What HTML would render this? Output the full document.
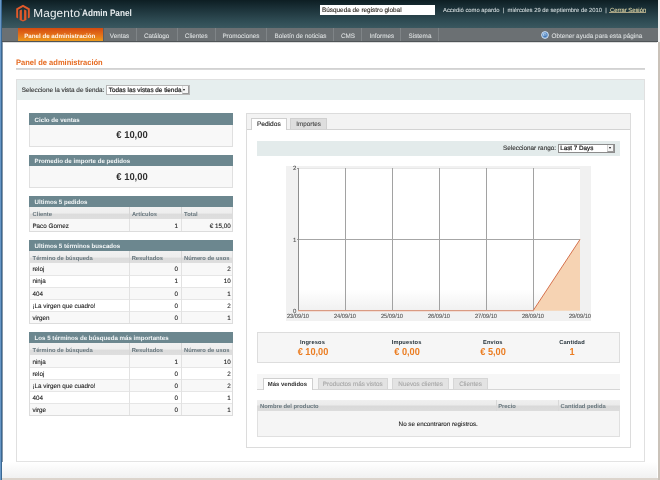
<!DOCTYPE html>
<html><head><meta charset="utf-8"><title>Magento Admin Panel</title>
<style>
html,body{margin:0;padding:0;width:660px;height:480px;overflow:hidden;background:#fff}
body{position:relative;font-family:"Liberation Sans",sans-serif;filter:blur(0.35px)}
body>div{position:absolute}
.t{position:absolute;white-space:nowrap;line-height:1;text-rendering:geometricPrecision;font-family:"Liberation Sans",sans-serif}
</style></head><body>
<div style="left:0.00px;top:0.00px;width:660.00px;height:480.00px;background:#fff"></div>
<div style="left:2.00px;top:0.00px;width:655.50px;height:28.00px;background:linear-gradient(#0d1e23 0%,#1d343b 35%,#2f4c54 75%,#3a5860 100%)"></div>
<div style="left:2.00px;top:28.00px;width:655.50px;height:14.00px;background:#6b7073"></div>
<div style="left:2.00px;top:41.00px;width:655.50px;height:1.00px;background:#4f5457"></div>
<div style="left:2.60px;top:42.00px;width:654.90px;height:1.00px;background:#dcdddd"></div>
<div style="left:18.00px;top:28.00px;width:85.00px;height:13.00px;background:linear-gradient(#d24a10,#e5711a 55%,#eb9a1c)"></div>
<div style="left:103.00px;top:28.00px;width:1.00px;height:13.00px;background:#595e61"></div>
<div style="left:136.00px;top:28.00px;width:1.00px;height:13.00px;background:#7f8487"></div>
<div style="left:177.00px;top:28.00px;width:1.00px;height:13.00px;background:#7f8487"></div>
<div style="left:215.00px;top:28.00px;width:1.00px;height:13.00px;background:#7f8487"></div>
<div style="left:266.00px;top:28.00px;width:1.00px;height:13.00px;background:#7f8487"></div>
<div style="left:333.00px;top:28.00px;width:1.00px;height:13.00px;background:#7f8487"></div>
<div style="left:361.00px;top:28.00px;width:1.00px;height:13.00px;background:#7f8487"></div>
<div style="left:400.00px;top:28.00px;width:1.00px;height:13.00px;background:#7f8487"></div>
<div style="left:438.00px;top:28.00px;width:1.00px;height:13.00px;background:#7f8487"></div>
<svg style="position:absolute;left:15px;top:4px" width="17" height="18" viewBox="15 4 17 18">
<path d="M16.2 17.6 V8.6 L23 4.7 L29.8 8.6 V17.6 L27.9 18.6 V9.7 L23 6.9 L18.1 9.7 V18.6 Z" fill="#e0592a"/>
<path d="M19.6 10.6 L21.9 9.4 V19.6 L23 20.2 L24.1 19.6 V9.4 L26.4 10.6 V20 L23 21.6 L19.6 20 Z" fill="#e0592a"/>
</svg>
<span class="t" style="left:33.20px;top:7.51px;font-size:11.8px;color:#eef2f3;-webkit-text-stroke:0.1px currentColor;letter-spacing:0.15px;-webkit-text-stroke:0;">Magento</span>
<span class="t" style="left:79.30px;top:9.31px;font-size:2.0px;color:#cfd6d8;-webkit-text-stroke:0.1px currentColor;-webkit-text-stroke:0;">TM</span>
<span class="t" style="left:82.40px;top:9.13px;font-size:9.3px;color:#e9eef0;font-weight:bold;transform:scaleX(0.885);transform-origin:0 0;">Admin Panel</span>
<div style="left:319.80px;top:4.90px;width:115.50px;height:9.90px;background:#fff"></div>
<span class="t" style="left:322.00px;top:7.58px;font-size:6.4px;color:#221d16;-webkit-text-stroke:0.1px currentColor;">Búsqueda de registro global</span>
<span class="t" style="left:443.00px;top:9.15px;font-size:5.85px;color:#cfd8da;-webkit-text-stroke:0.1px currentColor;">Accedió como apardo &nbsp;|&nbsp; miércoles 29 de septiembre de 2010 &nbsp;|&nbsp; <span style='color:#e2d9a8'>Cerrar Sesión</span></span>
<div style="left:609.40px;top:12.10px;width:36.20px;height:0.60px;background:#a9a384"></div>
<span class="t" style="left:24.20px;top:33.55px;font-size:6.2px;color:#fff5ea;font-weight:bold;">Panel de administración</span>
<span class="t" style="left:109.80px;top:34.02px;font-size:6.35px;color:#dcdfe0;-webkit-text-stroke:0.1px currentColor;">Ventas</span>
<span class="t" style="left:144.00px;top:34.02px;font-size:6.35px;color:#dcdfe0;-webkit-text-stroke:0.1px currentColor;">Catálogo</span>
<span class="t" style="left:184.80px;top:34.02px;font-size:6.35px;color:#dcdfe0;-webkit-text-stroke:0.1px currentColor;">Clientes</span>
<span class="t" style="left:222.40px;top:34.02px;font-size:6.35px;color:#dcdfe0;-webkit-text-stroke:0.1px currentColor;">Promociones</span>
<span class="t" style="left:274.50px;top:34.02px;font-size:6.35px;color:#dcdfe0;-webkit-text-stroke:0.1px currentColor;">Boletín de noticias</span>
<span class="t" style="left:340.90px;top:34.02px;font-size:6.35px;color:#dcdfe0;-webkit-text-stroke:0.1px currentColor;">CMS</span>
<span class="t" style="left:369.50px;top:34.02px;font-size:6.35px;color:#dcdfe0;-webkit-text-stroke:0.1px currentColor;">Informes</span>
<span class="t" style="left:408.50px;top:34.02px;font-size:6.35px;color:#dcdfe0;-webkit-text-stroke:0.1px currentColor;">Sistema</span>
<svg style="position:absolute;left:541px;top:30.5px" width="8" height="8" viewBox="0 0 8 8"><circle cx="4" cy="4" r="3.4" fill="#5b8fca" stroke="#dfeaf5" stroke-width="0.9"/><circle cx="3.6" cy="3.4" r="1.6" fill="#b9d6f1"/><path d="M3.9 2.6 L4.1 5.9" stroke="#2e5f9c" stroke-width="0.9"/></svg>
<span class="t" style="left:551.50px;top:34.03px;font-size:6.34px;color:#dcdfe0;-webkit-text-stroke:0.1px currentColor;">Obtener ayuda para esta página</span>
<div style="left:0.00px;top:0.00px;width:1.10px;height:480.00px;background:#6797c7"></div>
<div style="left:1.10px;top:0.00px;width:0.90px;height:480.00px;background:#3a6893"></div>
<div style="left:2.00px;top:42.30px;width:0.60px;height:437.70px;background:#8797a8"></div>
<div style="left:657.50px;top:42.30px;width:0.70px;height:437.70px;background:#fafafa"></div>
<div style="left:658.20px;top:42.30px;width:1.80px;height:437.70px;background:#cac2b9"></div>
<div style="left:657.50px;top:0.00px;width:2.50px;height:42.30px;background:#eeeeee"></div>
<div style="left:2.30px;top:462.00px;width:655.20px;height:16.20px;background:linear-gradient(#fff,#f1f1f1)"></div>
<div style="left:2.30px;top:478.20px;width:655.90px;height:1.80px;background:#dcd4cc"></div>
<span class="t" style="left:16.00px;top:58.91px;font-size:7.9px;color:#e66a20;font-weight:bold;transform:scaleX(0.955);transform-origin:0 0;">Panel de administración</span>
<div style="left:16.00px;top:68.00px;width:628.50px;height:1.00px;background:#d2d2d2"></div>
<div style="left:16.00px;top:69.00px;width:628.50px;height:1.00px;background:#d8d8d8"></div>
<div style="left:16.00px;top:79.40px;width:628.50px;height:382.20px;border:1px solid #e0e0e0;border-bottom:1.6px solid #e3e3e3;box-sizing:border-box;background:#fff"></div>
<div style="left:17.00px;top:80.40px;width:626.50px;height:19.60px;background:#e6eeee"></div>
<span class="t" style="left:21.80px;top:87.60px;font-size:6.38px;color:#303030;-webkit-text-stroke:0.1px currentColor;">Seleccione la vista de tienda:</span>
<div style="left:105.80px;top:85.30px;width:83.80px;height:9.60px;border:1px solid #b5b5b5;box-sizing:border-box;background:#fff"></div>
<span class="t" style="left:108.80px;top:87.92px;font-size:6.35px;color:#1e1e1e;-webkit-text-stroke:0.1px currentColor;-webkit-text-stroke:0.22px currentColor;">Todas las vistas de tienda</span>
<div style="left:182.00px;top:86.30px;width:6.60px;height:7.60px;background:#f6f6f6;border-right:1px solid #999;border-bottom:1px solid #999;border-left:1px solid #ddd;box-sizing:border-box"></div>
<div style="left:183.4px;top:89.0px;width:0;height:0;border-left:1.9px solid transparent;border-right:1.9px solid transparent;border-top:2.4px solid #111"></div>
<div style="left:29.40px;top:113.10px;width:204.10px;height:11.50px;background:#6c878f"></div>
<span class="t" style="left:34.60px;top:117.54px;font-size:6.15px;color:#f3f6f7;font-weight:bold;">Ciclo de ventas</span>
<div style="left:29.40px;top:124.60px;width:204.10px;height:22.20px;background:#f8f8f8;border:1px solid #e0e0e0;border-top:none;box-sizing:border-box"></div>
<span class="t" style="left:131.90px;transform:translateX(-50%);top:131.34px;font-size:10.0px;color:#2f2f2f;font-weight:bold;transform:translateX(-50%) scaleX(0.94);">€ 10,00</span>
<div style="left:29.40px;top:155.00px;width:204.10px;height:11.00px;background:#6c878f"></div>
<span class="t" style="left:34.60px;top:159.19px;font-size:6.15px;color:#f3f6f7;font-weight:bold;">Promedio de importe de pedidos</span>
<div style="left:29.40px;top:166.00px;width:204.10px;height:22.30px;background:#f8f8f8;border:1px solid #e0e0e0;border-top:none;box-sizing:border-box"></div>
<span class="t" style="left:131.90px;transform:translateX(-50%);top:172.84px;font-size:10.0px;color:#2f2f2f;font-weight:bold;transform:translateX(-50%) scaleX(0.94);">€ 10,00</span>
<div style="left:29.40px;top:196.00px;width:204.10px;height:10.90px;background:#6c878f"></div>
<span class="t" style="left:34.60px;top:200.14px;font-size:6.15px;color:#f3f6f7;font-weight:bold;">Ultimos 5 pedidos</span>
<div style="left:29.40px;top:206.90px;width:204.10px;height:11.85px;background:linear-gradient(#f1f1f1 0%,#eeeeee 50%,#dcdcdc 60%,#dedede 100%)"></div>
<span class="t" style="left:32.60px;top:213.14px;font-size:5.8px;color:#67767d;font-weight:bold;">Cliente</span>
<span class="t" style="left:131.90px;top:213.14px;font-size:5.8px;color:#67767d;font-weight:bold;">Artículos</span>
<span class="t" style="left:184.10px;top:213.14px;font-size:5.8px;color:#67767d;font-weight:bold;">Total</span>
<div style="left:29.40px;top:218.75px;width:204.10px;height:12.50px;background:#f8f8f8"></div>
<span class="t" style="left:32.40px;top:223.82px;font-size:6.3px;color:#222;-webkit-text-stroke:0.1px currentColor;">Paco Gomez</span>
<span class="t" style="right:481.90px;top:223.82px;font-size:6.3px;color:#222;-webkit-text-stroke:0.1px currentColor;">1</span>
<span class="t" style="right:429.30px;top:223.82px;font-size:6.3px;color:#222;-webkit-text-stroke:0.1px currentColor;">€ 15,00</span>
<div style="left:128.70px;top:206.90px;width:0.80px;height:11.85px;background:#d6d6d6"></div>
<div style="left:128.70px;top:218.75px;width:0.80px;height:12.50px;background:#e2e2e2"></div>
<div style="left:180.90px;top:206.90px;width:0.80px;height:11.85px;background:#d6d6d6"></div>
<div style="left:180.90px;top:218.75px;width:0.80px;height:12.50px;background:#e2e2e2"></div>
<div style="left:29.40px;top:206.90px;width:204.10px;height:25.35px;border:1px solid #dcdcdc;border-top:none;box-sizing:border-box;background:transparent"></div>
<div style="left:29.40px;top:240.00px;width:204.10px;height:11.20px;background:#6c878f"></div>
<span class="t" style="left:34.60px;top:244.29px;font-size:6.15px;color:#f3f6f7;font-weight:bold;">Ultimos 5 términos buscados</span>
<div style="left:29.40px;top:251.20px;width:204.10px;height:11.50px;background:linear-gradient(#f1f1f1 0%,#eeeeee 50%,#dcdcdc 60%,#dedede 100%)"></div>
<span class="t" style="left:32.60px;top:257.09px;font-size:5.8px;color:#67767d;font-weight:bold;">Término de búsqueda</span>
<span class="t" style="left:131.70px;top:257.09px;font-size:5.8px;color:#67767d;font-weight:bold;">Resultados</span>
<span class="t" style="left:184.00px;top:257.09px;font-size:5.8px;color:#67767d;font-weight:bold;">Número de usos</span>
<div style="left:29.40px;top:262.70px;width:204.10px;height:12.08px;background:#f8f8f8"></div>
<span class="t" style="left:32.40px;top:267.35px;font-size:6.3px;color:#222;-webkit-text-stroke:0.1px currentColor;">reloj</span>
<span class="t" style="right:482.00px;top:267.35px;font-size:6.3px;color:#222;-webkit-text-stroke:0.1px currentColor;">0</span>
<span class="t" style="right:429.30px;top:267.35px;font-size:6.3px;color:#222;-webkit-text-stroke:0.1px currentColor;">2</span>
<div style="left:29.40px;top:274.78px;width:204.10px;height:12.08px;background:#ffffff"></div>
<span class="t" style="left:32.40px;top:279.43px;font-size:6.3px;color:#222;-webkit-text-stroke:0.1px currentColor;">ninja</span>
<span class="t" style="right:482.00px;top:279.43px;font-size:6.3px;color:#222;-webkit-text-stroke:0.1px currentColor;">1</span>
<span class="t" style="right:429.30px;top:279.43px;font-size:6.3px;color:#222;-webkit-text-stroke:0.1px currentColor;">10</span>
<div style="left:29.40px;top:286.86px;width:204.10px;height:12.08px;background:#f8f8f8"></div>
<span class="t" style="left:32.40px;top:291.51px;font-size:6.3px;color:#222;-webkit-text-stroke:0.1px currentColor;">404</span>
<span class="t" style="right:482.00px;top:291.51px;font-size:6.3px;color:#222;-webkit-text-stroke:0.1px currentColor;">0</span>
<span class="t" style="right:429.30px;top:291.51px;font-size:6.3px;color:#222;-webkit-text-stroke:0.1px currentColor;">1</span>
<div style="left:29.40px;top:298.94px;width:204.10px;height:12.08px;background:#ffffff"></div>
<span class="t" style="left:32.40px;top:303.59px;font-size:6.3px;color:#222;-webkit-text-stroke:0.1px currentColor;">¡La virgen que cuadro!</span>
<span class="t" style="right:482.00px;top:303.59px;font-size:6.3px;color:#222;-webkit-text-stroke:0.1px currentColor;">0</span>
<span class="t" style="right:429.30px;top:303.59px;font-size:6.3px;color:#222;-webkit-text-stroke:0.1px currentColor;">2</span>
<div style="left:29.40px;top:311.02px;width:204.10px;height:12.08px;background:#f8f8f8"></div>
<span class="t" style="left:32.40px;top:315.67px;font-size:6.3px;color:#222;-webkit-text-stroke:0.1px currentColor;">virgen</span>
<span class="t" style="right:482.00px;top:315.67px;font-size:6.3px;color:#222;-webkit-text-stroke:0.1px currentColor;">0</span>
<span class="t" style="right:429.30px;top:315.67px;font-size:6.3px;color:#222;-webkit-text-stroke:0.1px currentColor;">1</span>
<div style="left:29.40px;top:274.58px;width:204.10px;height:1.00px;background:#e6e6e6"></div>
<div style="left:29.40px;top:286.66px;width:204.10px;height:1.00px;background:#e6e6e6"></div>
<div style="left:29.40px;top:298.74px;width:204.10px;height:1.00px;background:#e6e6e6"></div>
<div style="left:29.40px;top:310.82px;width:204.10px;height:1.00px;background:#e6e6e6"></div>
<div style="left:128.50px;top:251.20px;width:0.80px;height:11.50px;background:#d6d6d6"></div>
<div style="left:128.50px;top:262.70px;width:0.80px;height:60.40px;background:#e2e2e2"></div>
<div style="left:180.80px;top:251.20px;width:0.80px;height:11.50px;background:#d6d6d6"></div>
<div style="left:180.80px;top:262.70px;width:0.80px;height:60.40px;background:#e2e2e2"></div>
<div style="left:29.40px;top:251.20px;width:204.10px;height:72.90px;border:1px solid #dcdcdc;border-top:none;box-sizing:border-box;background:transparent"></div>
<div style="left:29.40px;top:331.90px;width:204.10px;height:11.50px;background:#6c878f"></div>
<span class="t" style="left:34.60px;top:336.34px;font-size:6.15px;color:#f3f6f7;font-weight:bold;">Los 5 términos de búsqueda más importantes</span>
<div style="left:29.40px;top:343.40px;width:204.10px;height:11.70px;background:linear-gradient(#f1f1f1 0%,#eeeeee 50%,#dcdcdc 60%,#dedede 100%)"></div>
<span class="t" style="left:32.60px;top:349.49px;font-size:5.8px;color:#67767d;font-weight:bold;">Término de búsqueda</span>
<span class="t" style="left:131.70px;top:349.49px;font-size:5.8px;color:#67767d;font-weight:bold;">Resultados</span>
<span class="t" style="left:184.00px;top:349.49px;font-size:5.8px;color:#67767d;font-weight:bold;">Número de usos</span>
<div style="left:29.40px;top:355.10px;width:204.10px;height:12.00px;background:#f8f8f8"></div>
<span class="t" style="left:32.40px;top:359.67px;font-size:6.3px;color:#222;-webkit-text-stroke:0.1px currentColor;">ninja</span>
<span class="t" style="right:482.00px;top:359.67px;font-size:6.3px;color:#222;-webkit-text-stroke:0.1px currentColor;">1</span>
<span class="t" style="right:429.30px;top:359.67px;font-size:6.3px;color:#222;-webkit-text-stroke:0.1px currentColor;">10</span>
<div style="left:29.40px;top:367.10px;width:204.10px;height:12.00px;background:#ffffff"></div>
<span class="t" style="left:32.40px;top:371.67px;font-size:6.3px;color:#222;-webkit-text-stroke:0.1px currentColor;">reloj</span>
<span class="t" style="right:482.00px;top:371.67px;font-size:6.3px;color:#222;-webkit-text-stroke:0.1px currentColor;">0</span>
<span class="t" style="right:429.30px;top:371.67px;font-size:6.3px;color:#222;-webkit-text-stroke:0.1px currentColor;">2</span>
<div style="left:29.40px;top:379.10px;width:204.10px;height:12.00px;background:#f8f8f8"></div>
<span class="t" style="left:32.40px;top:383.67px;font-size:6.3px;color:#222;-webkit-text-stroke:0.1px currentColor;">¡La virgen que cuadro!</span>
<span class="t" style="right:482.00px;top:383.67px;font-size:6.3px;color:#222;-webkit-text-stroke:0.1px currentColor;">0</span>
<span class="t" style="right:429.30px;top:383.67px;font-size:6.3px;color:#222;-webkit-text-stroke:0.1px currentColor;">2</span>
<div style="left:29.40px;top:391.10px;width:204.10px;height:12.00px;background:#ffffff"></div>
<span class="t" style="left:32.40px;top:395.67px;font-size:6.3px;color:#222;-webkit-text-stroke:0.1px currentColor;">404</span>
<span class="t" style="right:482.00px;top:395.67px;font-size:6.3px;color:#222;-webkit-text-stroke:0.1px currentColor;">0</span>
<span class="t" style="right:429.30px;top:395.67px;font-size:6.3px;color:#222;-webkit-text-stroke:0.1px currentColor;">1</span>
<div style="left:29.40px;top:403.10px;width:204.10px;height:12.00px;background:#f8f8f8"></div>
<span class="t" style="left:32.40px;top:407.67px;font-size:6.3px;color:#222;-webkit-text-stroke:0.1px currentColor;">virge</span>
<span class="t" style="right:482.00px;top:407.67px;font-size:6.3px;color:#222;-webkit-text-stroke:0.1px currentColor;">0</span>
<span class="t" style="right:429.30px;top:407.67px;font-size:6.3px;color:#222;-webkit-text-stroke:0.1px currentColor;">1</span>
<div style="left:29.40px;top:366.90px;width:204.10px;height:1.00px;background:#e6e6e6"></div>
<div style="left:29.40px;top:378.90px;width:204.10px;height:1.00px;background:#e6e6e6"></div>
<div style="left:29.40px;top:390.90px;width:204.10px;height:1.00px;background:#e6e6e6"></div>
<div style="left:29.40px;top:402.90px;width:204.10px;height:1.00px;background:#e6e6e6"></div>
<div style="left:128.50px;top:343.40px;width:0.80px;height:11.70px;background:#d6d6d6"></div>
<div style="left:128.50px;top:355.10px;width:0.80px;height:60.00px;background:#e2e2e2"></div>
<div style="left:180.80px;top:343.40px;width:0.80px;height:11.70px;background:#d6d6d6"></div>
<div style="left:180.80px;top:355.10px;width:0.80px;height:60.00px;background:#e2e2e2"></div>
<div style="left:29.40px;top:343.40px;width:204.10px;height:72.70px;border:1px solid #dcdcdc;border-top:none;box-sizing:border-box;background:transparent"></div>
<div style="left:246.40px;top:113.30px;width:384.60px;height:334.70px;border:1px solid #dcdcdc;box-sizing:border-box;background:#fff"></div>
<div style="left:247.40px;top:114.30px;width:382.60px;height:15.70px;background:#f3f3f3;border-bottom:1px solid #d3d3d3;box-sizing:border-box"></div>
<div style="left:251.40px;top:118.30px;width:35.30px;height:11.90px;background:#fff;border:1px solid #cfcfcf;border-bottom:none;box-sizing:border-box"></div>
<span class="t" style="left:268.80px;transform:translateX(-50%);top:122.01px;font-size:6.6px;color:#222;-webkit-text-stroke:0.1px currentColor;">Pedidos</span>
<div style="left:290.00px;top:118.30px;width:36.70px;height:11.00px;background:#dedede;border:1px solid #d0d0d0;border-bottom:none;box-sizing:border-box"></div>
<span class="t" style="left:308.60px;transform:translateX(-50%);top:122.27px;font-size:6.3px;color:#444;-webkit-text-stroke:0.1px currentColor;">Importes</span>
<div style="left:257.10px;top:140.60px;width:362.70px;height:15.60px;background:#e3ebeb"></div>
<span class="t" style="left:503.00px;top:146.42px;font-size:6.36px;color:#303030;-webkit-text-stroke:0.1px currentColor;">Seleccionar rango:</span>
<div style="left:558.00px;top:144.00px;width:57.00px;height:9.00px;border:1px solid #8c8c8c;box-sizing:border-box;background:#fff"></div>
<span class="t" style="left:560.20px;top:146.49px;font-size:6.27px;color:#111;-webkit-text-stroke:0.1px currentColor;-webkit-text-stroke:0.2px currentColor;">Last 7 Days</span>
<div style="left:607.00px;top:145.00px;width:7.00px;height:7.00px;background:#f4f4f4;border-right:1px solid #9a9a9a;border-bottom:1px solid #9a9a9a;border-left:1px solid #d0d0d0;box-sizing:border-box"></div>
<div style="left:608.6px;top:147.2px;width:0;height:0;border-left:1.9px solid transparent;border-right:1.9px solid transparent;border-top:2.4px solid #111"></div>
<div style="left:286.00px;top:165.60px;width:304.90px;height:155.70px;background:#f1f1f1"></div>
<div style="left:298.30px;top:167.90px;width:281.70px;height:142.90px;background:linear-gradient(#ffffff 0%,#ffffff 85%,#f0f0f0 100%)"></div>
<div style="left:298.30px;top:167.90px;width:281.70px;height:1.00px;background:#e6e6e6"></div>
<div style="left:345.00px;top:167.90px;width:1.00px;height:142.90px;background:#a2a2a2"></div>
<div style="left:392.00px;top:167.90px;width:1.00px;height:142.90px;background:#a2a2a2"></div>
<div style="left:439.00px;top:167.90px;width:1.00px;height:142.90px;background:#a2a2a2"></div>
<div style="left:486.00px;top:167.90px;width:1.00px;height:142.90px;background:#a2a2a2"></div>
<div style="left:533.00px;top:167.90px;width:1.00px;height:142.90px;background:#a2a2a2"></div>
<div style="left:298.30px;top:239.00px;width:281.70px;height:1.00px;background:#a6a6a6"></div>
<div style="left:297.50px;top:167.90px;width:1.50px;height:143.40px;background:#8e8e8e"></div>
<div style="left:296.60px;top:167.50px;width:1.00px;height:0.80px;background:#999"></div>
<div style="left:296.60px;top:239.10px;width:1.00px;height:0.80px;background:#999"></div>
<svg style="position:absolute;left:0;top:0" width="660" height="480">
<polygon points="533.05,310.80 580.00,239.5 580.00,310.80" fill="#f6d3b3"/>
<line x1="533.05" y1="310.8" x2="580.00" y2="239.5" stroke="#d5714d" stroke-width="1"/>
</svg>
<div style="left:298.30px;top:310.00px;width:235.25px;height:1.00px;background:#d99a82"></div>
<div style="left:298.30px;top:311.00px;width:235.25px;height:1.00px;background:#f1dcd4"></div>
<span class="t" style="right:363.70px;top:166.42px;font-size:6.0px;color:#555;-webkit-text-stroke:0.1px currentColor;">2</span>
<span class="t" style="right:363.70px;top:238.02px;font-size:6.0px;color:#555;-webkit-text-stroke:0.1px currentColor;">1</span>
<span class="t" style="right:363.70px;top:309.32px;font-size:6.0px;color:#555;-webkit-text-stroke:0.1px currentColor;">0</span>
<span class="t" style="left:298.30px;transform:translateX(-50%);top:314.34px;font-size:6.1px;color:#555;-webkit-text-stroke:0.1px currentColor;transform:translateX(-50%) scaleX(0.93);">23/09/10</span>
<span class="t" style="left:345.25px;transform:translateX(-50%);top:314.34px;font-size:6.1px;color:#555;-webkit-text-stroke:0.1px currentColor;transform:translateX(-50%) scaleX(0.93);">24/09/10</span>
<span class="t" style="left:392.20px;transform:translateX(-50%);top:314.34px;font-size:6.1px;color:#555;-webkit-text-stroke:0.1px currentColor;transform:translateX(-50%) scaleX(0.93);">25/09/10</span>
<span class="t" style="left:439.15px;transform:translateX(-50%);top:314.34px;font-size:6.1px;color:#555;-webkit-text-stroke:0.1px currentColor;transform:translateX(-50%) scaleX(0.93);">26/09/10</span>
<span class="t" style="left:486.10px;transform:translateX(-50%);top:314.34px;font-size:6.1px;color:#555;-webkit-text-stroke:0.1px currentColor;transform:translateX(-50%) scaleX(0.93);">27/09/10</span>
<span class="t" style="left:533.05px;transform:translateX(-50%);top:314.34px;font-size:6.1px;color:#555;-webkit-text-stroke:0.1px currentColor;transform:translateX(-50%) scaleX(0.93);">28/09/10</span>
<span class="t" style="left:580.00px;transform:translateX(-50%);top:314.34px;font-size:6.1px;color:#555;-webkit-text-stroke:0.1px currentColor;transform:translateX(-50%) scaleX(0.93);">29/09/10</span>
<div style="left:257.00px;top:332.00px;width:362.50px;height:31.00px;background:#f6f6f6;border:1px solid #dddddd;box-sizing:border-box"></div>
<span class="t" style="left:312.50px;transform:translateX(-50%);top:340.67px;font-size:5.7px;color:#25323a;font-weight:bold;letter-spacing:0.15px;">Ingresos</span>
<span class="t" style="left:312.50px;transform:translateX(-50%);top:348.07px;font-size:10.2px;color:#eb7d22;font-weight:bold;transform:translateX(-50%) scaleX(0.9);">€ 10,00</span>
<span class="t" style="left:406.60px;transform:translateX(-50%);top:340.67px;font-size:5.7px;color:#25323a;font-weight:bold;letter-spacing:0.15px;">Impuestos</span>
<span class="t" style="left:406.60px;transform:translateX(-50%);top:348.07px;font-size:10.2px;color:#eb7d22;font-weight:bold;transform:translateX(-50%) scaleX(0.9);">€ 0,00</span>
<span class="t" style="left:492.80px;transform:translateX(-50%);top:340.67px;font-size:5.7px;color:#25323a;font-weight:bold;letter-spacing:0.15px;">Envios</span>
<span class="t" style="left:492.80px;transform:translateX(-50%);top:348.07px;font-size:10.2px;color:#eb7d22;font-weight:bold;transform:translateX(-50%) scaleX(0.9);">€ 5,00</span>
<span class="t" style="left:572.00px;transform:translateX(-50%);top:340.67px;font-size:5.7px;color:#25323a;font-weight:bold;letter-spacing:0.15px;">Cantidad</span>
<span class="t" style="left:572.00px;transform:translateX(-50%);top:348.07px;font-size:10.2px;color:#eb7d22;font-weight:bold;transform:translateX(-50%) scaleX(0.9);">1</span>
<div style="left:257.30px;top:373.60px;width:362.70px;height:16.20px;background:#f6f6f6;border-bottom:1px solid #d6d6d6;box-sizing:border-box"></div>
<div style="left:262.50px;top:377.70px;width:50.00px;height:12.00px;background:#fff;border:1px solid #cfcfcf;border-bottom:none;box-sizing:border-box"></div>
<span class="t" style="left:287.40px;transform:translateX(-50%);top:382.57px;font-size:5.94px;color:#333;font-weight:bold;">Más vendidos</span>
<div style="left:317.50px;top:377.70px;width:70.50px;height:11.20px;background:#e3e3e3;border:1px solid #d6d6d6;border-bottom:none;box-sizing:border-box"></div>
<span class="t" style="left:352.75px;transform:translateX(-50%);top:382.07px;font-size:6.3px;color:#a6a6a6;-webkit-text-stroke:0.1px currentColor;">Productos más vistos</span>
<div style="left:392.30px;top:377.70px;width:56.60px;height:11.20px;background:#e3e3e3;border:1px solid #d6d6d6;border-bottom:none;box-sizing:border-box"></div>
<span class="t" style="left:420.60px;transform:translateX(-50%);top:382.07px;font-size:6.3px;color:#a6a6a6;-webkit-text-stroke:0.1px currentColor;">Nuevos clientes</span>
<div style="left:453.20px;top:377.70px;width:34.60px;height:11.20px;background:#e3e3e3;border:1px solid #d6d6d6;border-bottom:none;box-sizing:border-box"></div>
<span class="t" style="left:470.50px;transform:translateX(-50%);top:382.07px;font-size:6.3px;color:#a6a6a6;-webkit-text-stroke:0.1px currentColor;">Clientes</span>
<div style="left:257.30px;top:400.20px;width:362.70px;height:36.80px;background:#f5f5f5;border:1px solid #e0e0e0;box-sizing:border-box"></div>
<div style="left:257.30px;top:400.20px;width:362.70px;height:10.60px;background:linear-gradient(#efefef 0%,#ebebeb 45%,#d9d9d9 55%,#dcdcdc 100%)"></div>
<div style="left:495.60px;top:400.20px;width:0.80px;height:10.60px;background:#d8d8d8"></div>
<div style="left:557.70px;top:400.20px;width:0.80px;height:10.60px;background:#d8d8d8"></div>
<span class="t" style="left:260.00px;top:405.19px;font-size:5.8px;color:#67767d;font-weight:bold;">Nombre del producto</span>
<span class="t" style="left:498.20px;top:405.19px;font-size:5.8px;color:#67767d;font-weight:bold;">Precio</span>
<span class="t" style="left:560.60px;top:405.19px;font-size:5.8px;color:#67767d;font-weight:bold;">Cantidad pedida</span>
<span class="t" style="left:398.60px;top:421.68px;font-size:6.29px;color:#222;-webkit-text-stroke:0.1px currentColor;">No se encontraron registros.</span>
</body></html>
